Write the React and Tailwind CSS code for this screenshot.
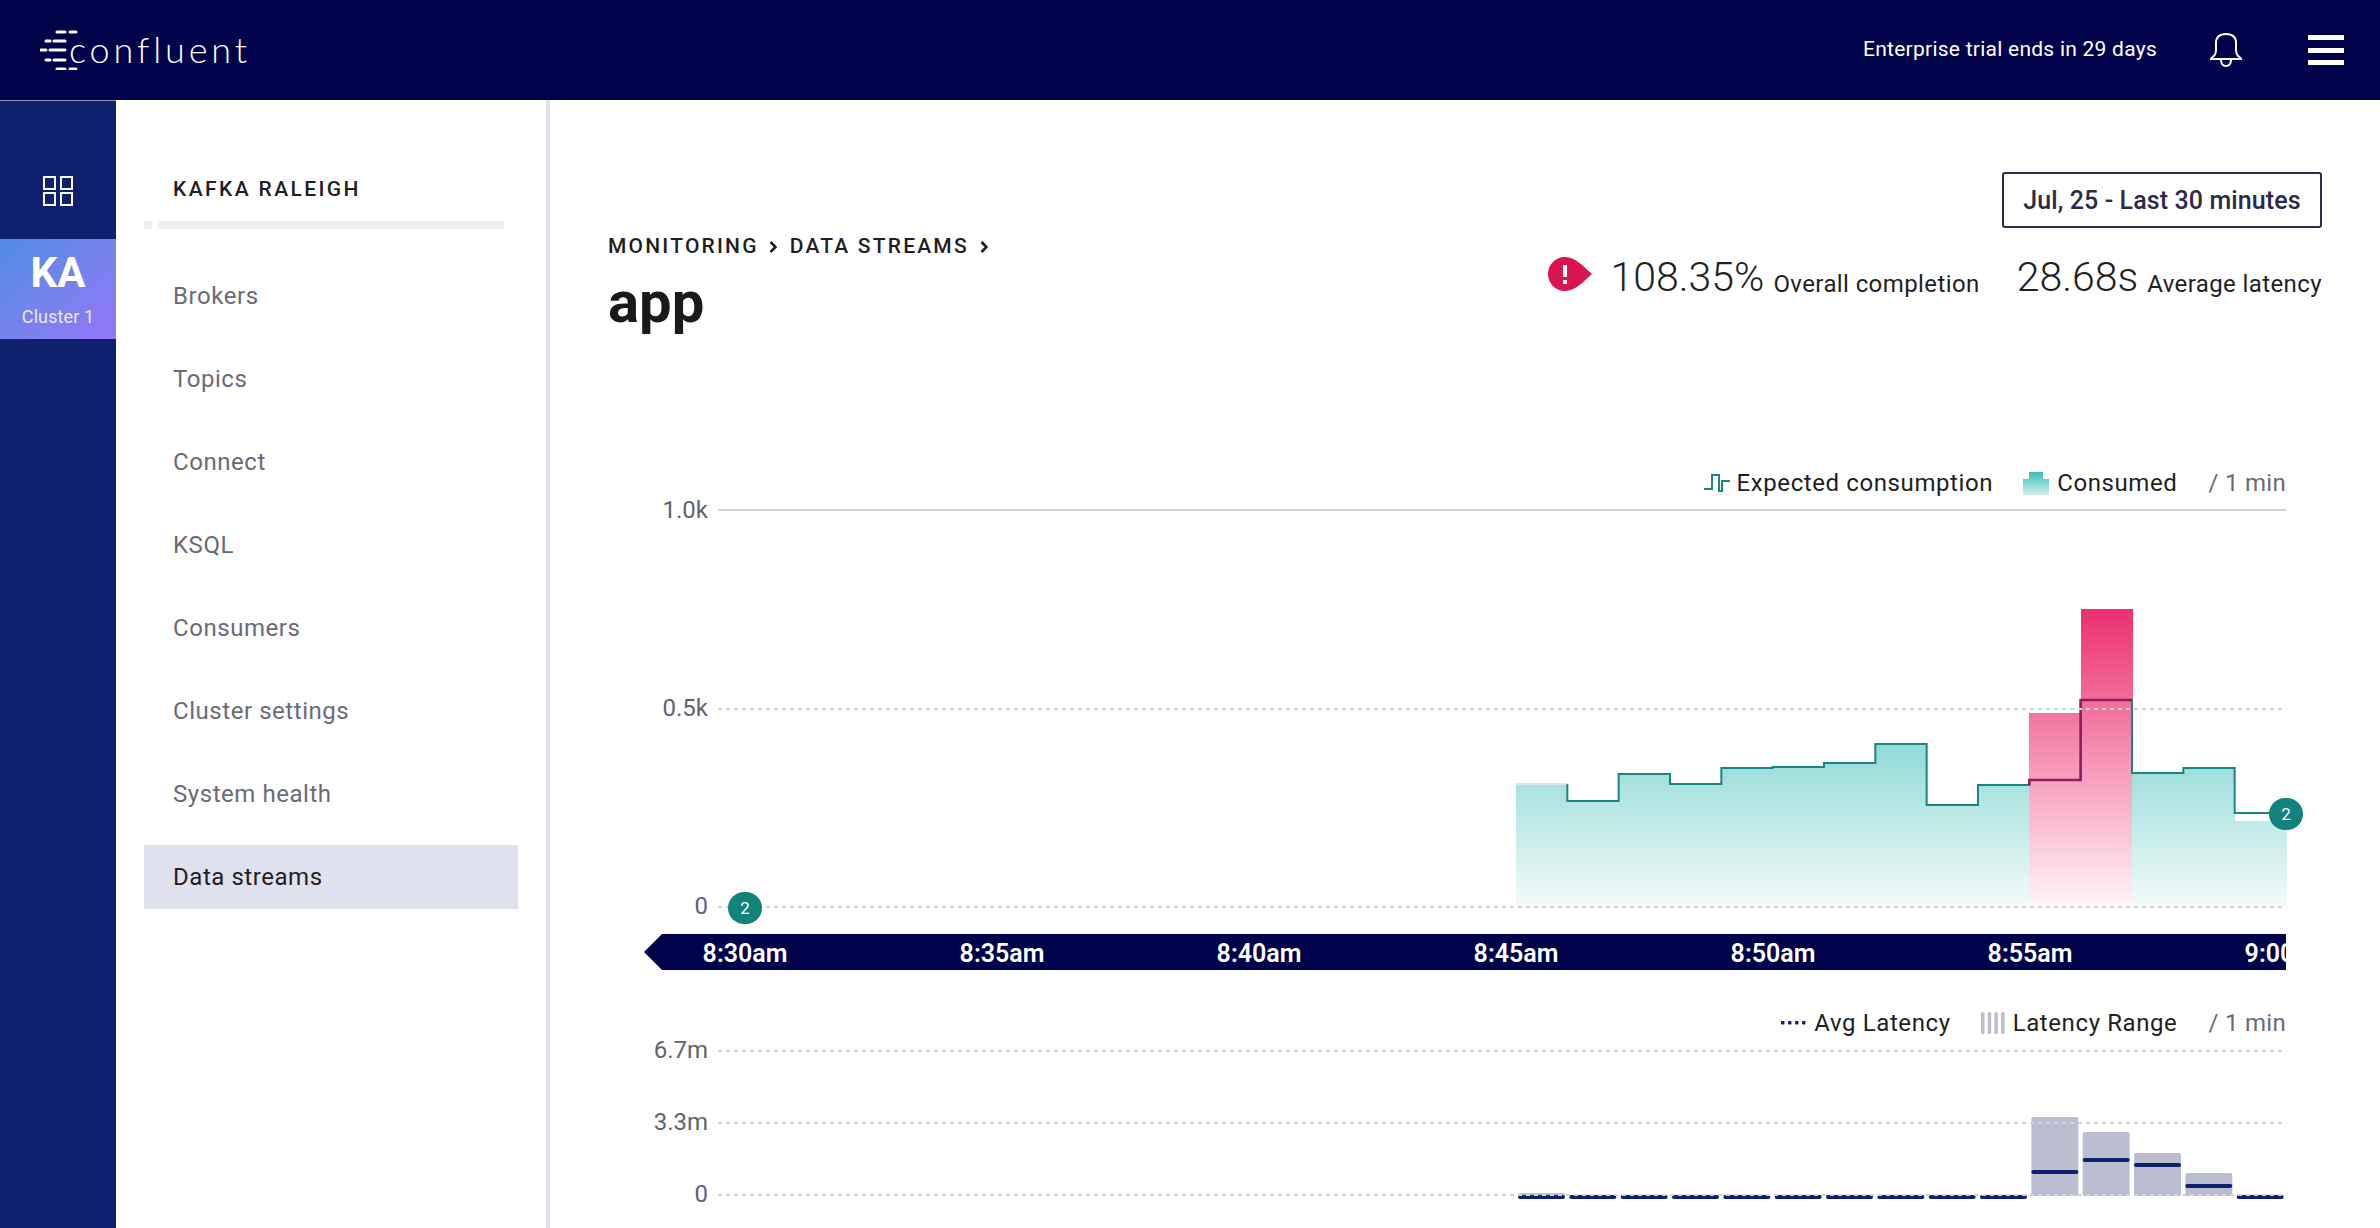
const navItems = ['Brokers', 'Topics', 'Connect', 'KSQL', 'Consumers', 'Cluster settings', 'System health', 'Data streams'];
const ticks = ['8:30am', '8:35am', '8:40am', '8:45am', '8:50am', '8:55am', '9:00am'];

// chart values are page y values, shifted by the svg's top below
const BAR_W = 770 / 15;
const X0 = 798;
const CHART_TOP = 498;
const lineTops = [784, 801, 774, 784, 768, 767, 763, 744, 805, 785, 780, 700, 773, 768, 813];
const areaTops = [785, 801, 774, 784, 768, 767, 763, 744, 805, 785, 713, 609, 773, 768, 821];
const BASE = 907;

const latencyTop = 1039;
const latency = [
  { top: 1193, avg: 1197 }, { top: 1195, avg: 1197 }, { top: 1195, avg: 1197 }, { top: 1195, avg: 1197 },
  { top: 1195, avg: 1197 }, { top: 1195, avg: 1197 }, { top: 1195, avg: 1197 }, { top: 1195, avg: 1197 },
  { top: 1195, avg: 1197 }, { top: 1195, avg: 1197 }, { top: 1117, avg: 1172 }, { top: 1132, avg: 1160 },
  { top: 1153, avg: 1165 }, { top: 1173, avg: 1186 }, { top: 1195, avg: 1197 },
];

const barX = (i) => X0 + i * BAR_W;
const y1 = (v) => v - CHART_TOP;

const stepPath = (from, to) => {
  let d = `M${barX(from)} ${y1(lineTops[from])}`;
  for (let i = from; i <= to; i++) {
    d += ` V${y1(lineTops[i])} H${barX(i + 1)}`;
  }
  return d;
};

const Logo = () => (
  <div className="flex items-center">
    <svg width="38" height="40" viewBox="0 0 38 40" fill="none" stroke="#fff" strokeWidth="3" strokeLinecap="round">
      <path d="M17 2h8M30 2h6" />
      <path d="M6 11h4M14 11h11" />
      <path d="M1 20h5M10 20h15" />
      <path d="M6 30h4M14 30h11" />
      <path d="M17 39h8M30 39h6" />
    </svg>
    <span className="font-['Lato'] font-light text-[36px] leading-none tracking-[3.9px] text-white -ml-[9px] mb-[3px]">confluent</span>
  </div>
);

const Chevron = () => (
  <svg width="8" height="14" viewBox="0 0 8 14" fill="none" stroke="#1f1f1f" strokeWidth="2.6">
    <path d="M1.5 2l5 5-5 5" />
  </svg>
);

const Badge = ({ className }) => (
  <div className={`absolute w-[34px] h-[32px] rounded-full bg-[#12827d] text-white text-[17px] leading-[32px] text-center ${className}`}>2</div>
);

const LegendText = ({ children }) => <span className="text-[24px] leading-[30px] text-[#1f1f1f] tracking-[0.6px]">{children}</span>;

const ThroughputChart = () => (
  <svg width="1568" height="436" className="block overflow-visible">
    <defs>
      <linearGradient id="teal" gradientUnits="userSpaceOnUse" x1="0" y1="230" x2="0" y2="409">
        <stop offset="0" stopColor="#86d7d2" />
        <stop offset="1" stopColor="#f3fbfa" />
      </linearGradient>
      <linearGradient id="pink" gradientUnits="userSpaceOnUse" x1="0" y1="111" x2="0" y2="409">
        <stop offset="0" stopColor="#ec2f72" />
        <stop offset="1" stopColor="#fff5f8" />
      </linearGradient>
    </defs>
    {areaTops.map((top, i) => (
      <rect key={i} x={barX(i)} y={y1(top)} width={BAR_W + 0.5} height={BASE - top} shapeRendering="crispEdges" fill={i === 10 || i === 11 ? 'url(#pink)' : 'url(#teal)'} />
    ))}
    <path d={`M${barX(0)} ${y1(784)} H${barX(1)}`} stroke="#d3e8e7" strokeWidth="2" fill="none" />
    <path d={`M${barX(1)} ${y1(784)} ${stepPath(1, 14).replace('M', 'L')}`} stroke="#1a8583" strokeWidth="2" fill="none" />
    <path d={`M${barX(10)} ${y1(785)} V${y1(780)} H${barX(11)} V${y1(700)} H${barX(12)}`} stroke="#8c1f58" strokeWidth="2.5" fill="none" />
    <path d="M0 12H1568" stroke="#d2d2d2" strokeWidth="2" />
    <path d="M0 211H1568M0 409H1568" stroke="#d2d2d2" strokeWidth="2" strokeDasharray="4 4" />
  </svg>
);

const LatencyChart = () => (
  <svg width="1568" height="189" className="block overflow-visible">
    {latency.map((b, i) => (
      <rect key={i} x={barX(i) + 2} y={b.top - latencyTop} width="47" height={1195 - b.top + 1} rx="2" fill="#bbbed0" />
    ))}
    {latency.map((b, i) => (
      <rect key={i} x={barX(i) + 2} y={b.avg - latencyTop - 2} width="47" height="4" rx="2" fill="#0f206f" />
    ))}
    <path d="M0 12H1568M0 84H1568M0 156H1568" stroke="#d2d2d2" strokeWidth="2" strokeDasharray="4 4" />
  </svg>
);

export default function App() {
  return (
    <div className="h-screen flex flex-col overflow-hidden bg-white font-['Roboto',sans-serif]">
      {/* Top bar */}
      <header className="h-[100px] shrink-0 bg-[#00034a] flex items-center pl-[40px] pr-[36px]">
        <Logo />
        <span className="ml-auto text-[21px] text-white tracking-[0.25px]">Enterprise trial ends in 29 days</span>
        <svg className="ml-[53px]" width="32" height="34" viewBox="0 0 32 34" fill="none" stroke="#fff" strokeWidth="2">
          <path d="M1 26c0-2 5-2 5-9V10C6 4 10 1 16 1s10 3 10 9v7c0 7 5 7 5 9z" />
          <path d="M11 27c0 8 10 8 10 0" />
        </svg>
        <div className="ml-[66px] w-[36px] flex flex-col gap-[7.5px]">
          <div className="h-[5px] bg-white" />
          <div className="h-[5px] bg-white" />
          <div className="h-[5px] bg-white" />
        </div>
      </header>

      <div className="flex flex-1 min-h-0">
        {/* Cluster rail */}
        <aside className="w-[116px] shrink-0 bg-[#0f206f] border-t border-[#8c93b8] pt-[75px]">
          <svg className="mx-auto block" width="30" height="30" viewBox="0 0 30 30" fill="none" stroke="#fff" strokeWidth="2">
            <rect x="1" y="1" width="11" height="12" />
            <rect x="18" y="1" width="11" height="12" />
            <rect x="1" y="17" width="11" height="12" />
            <rect x="18" y="17" width="11" height="12" />
          </svg>
          <div className="mt-[33px] h-[100px] bg-gradient-to-br from-[#4c8de4] to-[#9276f6] flex flex-col items-center text-white">
            <span className="mt-[12px] text-[42px] leading-[44px] font-bold">KA</span>
            <span className="mt-[11px] text-[18px] leading-[22px] text-[#e9e9ff] tracking-[0.1px]">Cluster 1</span>
          </div>
        </aside>

        {/* Section nav */}
        <nav className="w-[434px] shrink-0 border-r-4 border-[#dfe1ee] pt-[77px]">
          <div className="pl-[57px] text-[21px] leading-[24px] font-medium tracking-[2.4px] text-[#1f1f1f]">KAFKA RALEIGH</div>
          <div className="mt-[20px] ml-[28px] flex gap-[6px]">
            <div className="w-[8px] h-[8px] bg-[#eeeef4]" />
            <div className="w-[346px] h-[8px] bg-[#eeeef4]" />
          </div>
          <ul className="mt-[35px] mx-[28px] flex flex-col gap-[19px]">
            {navItems.map((item) => (
              <li
                key={item}
                className={`h-[64px] pl-[29px] flex items-center text-[24px] tracking-[0.55px] ${item === 'Data streams' ? 'bg-[#dfe1ee] text-[#1f1f1f]' : 'text-[#6a6a78]'}`}
              >
                {item}
              </li>
            ))}
          </ul>
        </nav>

        {/* Main */}
        <main className="flex-1 min-w-0 px-[58px] pt-[72px] overflow-hidden">
          <div className="flex justify-between items-start">
            <div className="pt-[63px]">
              <div className="flex items-center h-[24px] text-[21px] font-medium tracking-[2.2px] text-[#1f1f1f]">
                <span>MONITORING</span>
                <span className="ml-[10px]"><Chevron /></span>
                <span className="ml-[13px]">DATA STREAMS</span>
                <span className="ml-[11px]"><Chevron /></span>
              </div>
              <h1 className="mt-[11px] text-[58px] leading-[64px] font-bold text-[#1a1a1a]">app</h1>
            </div>
            <div className="flex flex-col items-end">
              <button className="w-[320px] h-[56px] pt-[2px] border-2 border-[#2c2a4a] rounded-[3px] text-[25px] font-medium text-[#2c2a4a] tracking-[0.1px]">
                Jul, 25 - Last 30 minutes
              </button>
              <div className="mt-[26px] flex items-baseline h-[48px] text-[#1f1f1f]">
                <svg className="self-center mr-[19px] -mt-[8px]" width="44" height="34" viewBox="0 0 44 34">
                  <path d="M17 0c10 0 18 9 27 17-9 8-17 17-27 17C7 34 0 26 0 17S7 0 17 0z" fill="#d81453" />
                  <rect x="15" y="8" width="4" height="12" fill="#fff" />
                  <rect x="15" y="23" width="4" height="4" fill="#fff" />
                </svg>
                <span className="text-[41px] leading-[48px] font-light -translate-y-[1px]">108.35%</span>
                <span className="ml-[9px] text-[24px] tracking-[0.4px]">Overall completion</span>
                <span className="ml-[37px] text-[41px] leading-[48px] font-light -translate-y-[1px]">28.68s</span>
                <span className="ml-[9px] text-[24px] tracking-[0.4px]">Average latency</span>
              </div>
            </div>
          </div>

          <section className="mt-[134px] w-[1678px]">
            <div className="h-[30px] flex items-center justify-end">
              <svg className="mr-[7px]" width="26" height="18" viewBox="0 0 26 18" fill="none" stroke="#1a8583" strokeWidth="2">
                <path d="M0 15H8V1H15V17H18V7H26" />
              </svg>
              <LegendText>Expected consumption</LegendText>
              <svg className="ml-[30px] mr-[8px]" width="26" height="23" viewBox="0 0 26 23">
                <defs>
                  <linearGradient id="legendTeal" x1="0" y1="0" x2="0" y2="1">
                    <stop offset="0" stopColor="#38bdb5" />
                    <stop offset="1" stopColor="#d5f0ee" />
                  </linearGradient>
                </defs>
                <path d="M6 0H20V7H26V23H0V7H6z" fill="url(#legendTeal)" />
              </svg>
              <LegendText>Consumed</LegendText>
              <span className="ml-[31px] text-[24px] leading-[30px] text-[#6a6a78] tracking-[0.3px]">/ 1 min</span>
            </div>
            <div className="flex items-start h-[436px]">
              <div className="w-[100px] h-[420px] flex flex-col justify-between items-end text-[24px] leading-[24px] text-[#62626f]">
                <span>1.0k</span>
                <span>0.5k</span>
                <span>0</span>
              </div>
              <div className="relative ml-[10px]">
                <ThroughputChart />
                <Badge className="left-[10px] top-[394px]" />
                <Badge className="left-[1551px] top-[300px]" />
              </div>
            </div>
            <div className="ml-[36px] h-[36px] bg-[#00034a] flex overflow-hidden [clip-path:polygon(18px_0,100%_0,100%_100%,18px_100%,0_50%)]">
              <div className="flex shrink-0 -ml-[27.5px]">
                {ticks.map((t) => (
                  <span key={t} className="w-[257px] shrink-0 text-center text-[25px] leading-[40px] font-semibold text-white">{t}</span>
                ))}
              </div>
            </div>

            <div className="mt-[38px] h-[30px] flex items-center justify-end">
              <svg className="mr-[8px]" width="25" height="4" viewBox="0 0 25 4" fill="#0f206f">
                <rect x="0" width="3.5" height="3.5" rx="1" />
                <rect x="7" width="3.5" height="3.5" rx="1" />
                <rect x="14" width="3.5" height="3.5" rx="1" />
                <rect x="21" width="3.5" height="3.5" rx="1" />
              </svg>
              <LegendText>Avg Latency</LegendText>
              <svg className="ml-[30px] mr-[8px]" width="24" height="22" viewBox="0 0 24 22" fill="#bbbed0">
                <rect x="0" width="3.5" height="22" rx="1.5" />
                <rect x="6.7" width="3.5" height="22" rx="1.5" />
                <rect x="13.4" width="3.5" height="22" rx="1.5" />
                <rect x="20.1" width="3.5" height="22" rx="1.5" />
              </svg>
              <LegendText>Latency Range</LegendText>
              <span className="ml-[31px] text-[24px] leading-[30px] text-[#6a6a78] tracking-[0.3px]">/ 1 min</span>
            </div>
            <div className="mt-[1px] flex items-start">
              <div className="w-[100px] h-[168px] -mt-[1px] flex flex-col justify-between items-end text-[24px] leading-[24px] text-[#62626f]">
                <span>6.7m</span>
                <span>3.3m</span>
                <span>0</span>
              </div>
              <div className="ml-[10px]">
                <LatencyChart />
              </div>
            </div>
          </section>
        </main>
      </div>
    </div>
  );
}
